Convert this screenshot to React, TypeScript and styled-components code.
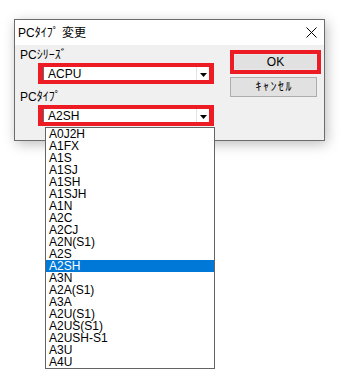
import React from 'react';
import styled, { createGlobalStyle } from 'styled-components';

const GlobalStyle = createGlobalStyle`
  html, body {
    margin: 0;
    padding: 0;
    background: #fff;
  }
  body {
    font-family: "Liberation Sans", "Noto Sans CJK JP", sans-serif;
    font-size: 12px;
    color: #000;
  }
`;

const Page = styled.div`
  width: 344px;
  height: 389px;
  box-sizing: border-box;
  padding: 19px 0 0 14px;
`;

const Dialog = styled.div`
  position: relative;
  width: 311px;
  height: 122px;
  box-sizing: border-box;
  border: 1px solid #6c6c6c;
  background: #f0f0f0;
  box-shadow: 2px 3px 12px rgba(0, 0, 0, 0.26);
  display: flex;
  flex-direction: column;
`;

const TitleBar = styled.div`
  height: 25px;
  flex: none;
  background: #fff;
  display: flex;
  align-items: center;
  justify-content: space-between;
  padding: 0 7px 0 3px;
`;

const Title = styled.span`
  font-size: 12px;
  line-height: 14px;
`;

const Body = styled.div`
  flex: 1;
  display: flex;
  padding-left: 5px;
`;

const Fields = styled.div`
  display: flex;
  flex-direction: column;
  width: 194px;
`;

const Label = styled.div<{ $offset: number }>`
  margin-top: ${p => p.$offset}px;
  height: 15px;
  line-height: 15px;
`;

const ComboWrap = styled.div`
  position: relative;
  margin-left: 18px;
  width: 176px;
  height: 21px;
`;

const ComboFrame = styled.div`
  height: 100%;
  box-sizing: border-box;
  border: 4px solid #ed1c24;
  border-left-width: 5px;
  border-right-width: 5px;
  display: flex;
  background: #fff;
`;

const ComboValue = styled.div`
  flex: 1;
  border-left: 1px solid #6a6a6a;
  padding: 1px 0 0 4px;
  line-height: 13px;
`;

const ComboArrow = styled.div`
  width: 13px;
  box-sizing: border-box;
  border-left: 1px solid #e3e3e3;
  display: flex;
  align-items: center;
  justify-content: center;
  padding-top: 2px;
`;

const DropList = styled.ul`
  position: absolute;
  top: calc(100% + 1px);
  left: 7px;
  width: 170px;
  margin: 0;
  padding: 0;
  list-style: none;
  box-sizing: border-box;
  border: 1px solid #646464;
  background: #fff;
  z-index: 2;
`;

const DropItem = styled.li<{ $selected?: boolean }>`
  height: 12px;
  line-height: 12px;
  padding-left: 3px;
  background: ${p => (p.$selected ? '#0078d7' : 'transparent')};
  color: ${p => (p.$selected ? '#fff' : '#000')};
`;

const Buttons = styled.div`
  display: flex;
  flex-direction: column;
  margin-left: 16px;
  padding-top: 5px;
`;

const RedFrame = styled.div`
  width: 91px;
  height: 24px;
  box-sizing: border-box;
  border: 4px solid #ed1c24;
  display: flex;
`;

const Button = styled.button<{ $width?: number; $framed?: boolean; $spacing?: number }>`
  width: ${p => (p.$width ? `${p.$width}px` : '100%')};
  height: ${p => (p.$framed ? '100%' : '20px')};
  margin: 0;
  margin-top: ${p => (p.$framed ? 0 : 3)}px;
  padding: 0 0 0 ${p => p.$spacing || 0}px;
  box-sizing: border-box;
  border: 1px solid ${p => (p.$framed ? '#e8e8e8' : '#adadad')};
  background: #e1e1e1;
  font-family: "Liberation Sans", "Noto Sans CJK JP", sans-serif;
  font-size: 12px;
  line-height: 14px;
  letter-spacing: ${p => p.$spacing || 0}px;
  color: #000;
`;

const types = [
  'A0J2H', 'A1FX', 'A1S', 'A1SJ', 'A1SH', 'A1SJH', 'A1N', 'A2C', 'A2CJ', 'A2N(S1)',
  'A2S', 'A2SH', 'A3N', 'A2A(S1)', 'A3A', 'A2U(S1)', 'A2US(S1)', 'A2USH-S1', 'A3U', 'A4U'
];

function Arrow() {
  return (
    <svg width="7" height="4" viewBox="0 0 7 4">
      <path d="M0 0H7L3.5 4Z" fill="#000" />
    </svg>
  );
}

function CloseIcon() {
  return (
    <svg width="11" height="11" viewBox="0 0 11 11">
      <path d="M0.5 0.5L10.5 10.5M10.5 0.5L0.5 10.5" stroke="#000" strokeWidth="1" />
    </svg>
  );
}

export default function App() {
  const selected = 'A2SH';
  return (
    <Page>
      <GlobalStyle />
      <Dialog>
        <TitleBar>
          <Title>PCﾀｲﾌﾟ 変更</Title>
          <CloseIcon />
        </TitleBar>
        <Body>
          <Fields>
            <Label $offset={3}>PCｼﾘｰｽﾞ</Label>
            <ComboWrap>
              <ComboFrame>
                <ComboValue>ACPU</ComboValue>
                <ComboArrow>
                  <Arrow />
                </ComboArrow>
              </ComboFrame>
            </ComboWrap>
            <Label $offset={6}>PCﾀｲﾌﾟ</Label>
            <ComboWrap>
              <ComboFrame>
                <ComboValue>A2SH</ComboValue>
                <ComboArrow>
                  <Arrow />
                </ComboArrow>
              </ComboFrame>
              <DropList>
                {types.map(t => (
                  <DropItem key={t} $selected={t === selected}>
                    {t}
                  </DropItem>
                ))}
              </DropList>
            </ComboWrap>
          </Fields>
          <Buttons>
            <RedFrame>
              <Button $framed>OK</Button>
            </RedFrame>
            <Button $width={87} $spacing={1.5}>ｷｬﾝｾﾙ</Button>
          </Buttons>
        </Body>
      </Dialog>
    </Page>
  );
}
